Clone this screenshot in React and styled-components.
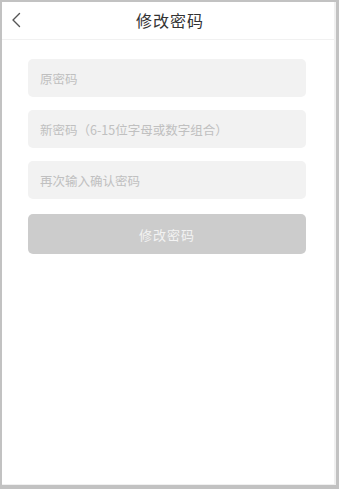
import React from 'react';
import styled, { createGlobalStyle } from 'styled-components';

const GlobalStyle = createGlobalStyle`
  html, body {
    margin: 0;
    padding: 0;
    background: #ffffff;
  }
  * { box-sizing: border-box; }
`;

const Frame = styled.div`
  width: 339px;
  height: 489px;
  background: #ffffff;
  border-top: 2px solid #c2c2c2;
  border-left: 2px solid #c2c2c2;
  border-right: 3px solid #c2c2c2;
  border-bottom: 4px solid #c2c2c2;
  box-shadow: inset -2px -1px 0 #f0f0f0;
  font-family: "Noto Sans CJK SC", "Noto Sans", sans-serif;
  display: flex;
  flex-direction: column;
`;

const Header = styled.div`
  height: 38px;
  padding-bottom: 2px;
  border-bottom: 1px solid #f1f1f1;
  display: flex;
  align-items: center;
  justify-content: center;
  position: relative;
`;

const Back = styled.button`
  position: absolute;
  left: 4px;
  top: 7px;
  width: 20px;
  height: 22px;
  padding: 0;
  border: none;
  background: none;
  display: flex;
  align-items: center;
  justify-content: center;
`;

const Title = styled.h1`
  margin: 0;
  font-size: 16px;
  font-weight: 400;
  color: #333333;
  letter-spacing: 1px;
  padding-left: 2px;
`;

const Form = styled.div`
  display: flex;
  flex-direction: column;
  gap: 13px;
  padding: 19px 30px 0 26px;
`;

const Field = styled.input`
  height: 38px;
  width: 100%;
  border: none;
  outline: none;
  border-radius: 5px;
  background: #f2f2f2;
  padding: 0 12px;
  font-family: inherit;
  font-size: 12.5px;
  color: #333;
  &::placeholder {
    color: #c0c0c0;
  }
`;

const Submit = styled.button`
  margin-top: 2px;
  height: 40px;
  border: none;
  border-radius: 5px;
  background: #cccccc;
  color: #f3f3f3;
  font-family: inherit;
  font-size: 13px;
  letter-spacing: 1px;
`;

export default function App() {
  return (
    <>
      <GlobalStyle />
      <Frame>
        <Header>
          <Back aria-label="back">
            <svg width="10" height="16" viewBox="0 0 10 16" fill="none">
              <polyline points="8.5,1.5 2,8 8.5,14.5" stroke="#555" strokeWidth="1.4" strokeLinecap="round" strokeLinejoin="round" />
            </svg>
          </Back>
          <Title>修改密码</Title>
        </Header>
        <Form>
          <Field type="password" placeholder="原密码" />
          <Field type="password" placeholder="新密码（6-15位字母或数字组合）" />
          <Field type="password" placeholder="再次输入确认密码" />
          <Submit disabled>修改密码</Submit>
        </Form>
      </Frame>
    </>
  );
}
